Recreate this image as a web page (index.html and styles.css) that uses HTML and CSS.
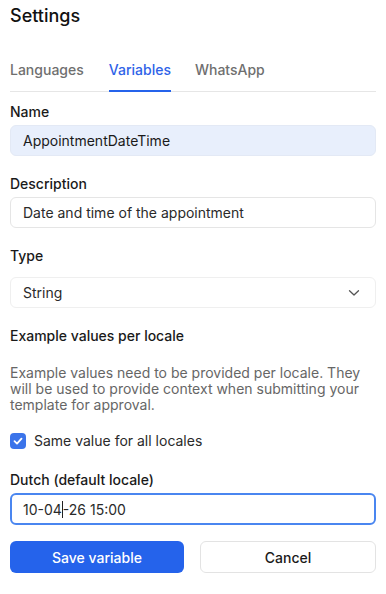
FILE: index.html
```
<!DOCTYPE html>
<html>
<head>
<meta charset="utf-8">
<link rel="stylesheet" href="styles.css">
</head>
<body>
<div class="panel">
  <h1 class="title">Settings</h1>
  <nav class="tabs">
    <span class="tab">Languages</span>
    <span class="tab active">Variables</span>
    <span class="tab">WhatsApp</span>
  </nav>
  <div class="field">
    <label class="label">Name</label>
    <div class="input filled">AppointmentDateTime</div>
  </div>
  <div class="field">
    <label class="label">Description</label>
    <div class="input">Date and time of the appointment</div>
  </div>
  <div class="field type-field">
    <label class="label">Type</label>
    <div class="input select">
      <span>String</span>
      <svg class="chev" width="12" height="8" viewBox="0 0 12 8"><path d="M1.5 1.8 L6 6 L10.5 1.8" fill="none" stroke="#555" stroke-width="1.3" stroke-linecap="round" stroke-linejoin="round"/></svg>
    </div>
  </div>
  <h2 class="section">Example values per locale</h2>
  <p class="help">Example values need to be provided per locale. They will be used to provide context when submitting your template for approval.</p>
  <div class="check">
    <span class="box"><svg width="16" height="16" viewBox="0 0 16 16"><path d="M4.5 8.2 L7 10.6 L11.5 5.6" fill="none" stroke="#fff" stroke-width="1.8" stroke-linecap="round" stroke-linejoin="round"/></svg></span>
    <span class="check-label">Same value for all locales</span>
  </div>
  <div class="field">
    <label class="label">Dutch (default locale)</label>
    <div class="input focus">10-04<span class="caret"></span>-26 15:00</div>
  </div>
  <div class="actions">
    <button class="btn primary">Save variable</button>
    <button class="btn secondary">Cancel</button>
  </div>
</div>
</body>
</html>
```
FILE: styles.css
```
* { box-sizing: border-box; }
html, body { margin: 0; padding: 0; background: #fff; }
body { font-family: Inter, "Noto Sans", sans-serif; color: #1a1a1a; }
.panel { padding: 4px 10px 0 10px; }
.title { margin: 0; font-size: 18px; line-height: 24px; font-weight: 500; color: #111; }
.tabs { display: flex; gap: 24px; margin-top: 32px; border-bottom: 1px solid #e6e6e6; }
.tab { font-size: 14px; font-weight: 500; color: #6f6f6f; line-height: 20px; padding: 0 0 10px 0; border-bottom: 2px solid transparent; margin-bottom: -1px; }
.tab.active { color: #2f63e8; border-bottom-color: #2563eb; margin-left: 1px; }
.field { display: flex; flex-direction: column; margin-top: 11px; }
.label { font-size: 14px; font-weight: 500; line-height: 18px; color: #1a1a1a; margin-bottom: 4px; }
.input { height: 31px; border: 1px solid #e5e5e5; border-radius: 6px; padding: 0 12px; display: flex; align-items: center; font-size: 14px; color: #2a2a2a; }
.input.filled { background: #e8effc; border-color: #e3e9f5; color: #1a1a1a; }
.field + .field { margin-top: 19px; }
.type-field .label { margin-bottom: 12px; }
.select { justify-content: space-between; border-color: #efefef; }
.chev { margin-right: 3px; }
.section { margin: 19px 0 0 0; font-size: 14px; font-weight: 500; line-height: 18px; color: #1a1a1a; }
.help { margin: 20px 0 0 0; font-size: 14px; line-height: 16px; color: #666; }
.check { display: flex; align-items: center; gap: 8px; margin-top: 19px; }
.box { width: 16px; height: 16px; border-radius: 4px; background: #3b74ea; display: flex; }
.check-label { font-size: 14px; color: #2a2a2a; line-height: 18px; }
.check + .field { margin-top: 21px; }
.focus { height: 32px; border: 2px solid #4a86f0; padding-left: 11px; }
.caret { display: inline-block; width: 1px; height: 17px; background: #222; }
.actions { display: flex; gap: 16px; margin-top: 16px; }
.btn { flex: 1; height: 32px; border-radius: 6px; font-family: Inter, sans-serif; font-size: 14px; font-weight: 500; }
.primary { background: #2563eb; color: #fff; border: none; }
.secondary { background: #fff; color: #1a1a1a; border: 1px solid #e3e3e3; }
```
